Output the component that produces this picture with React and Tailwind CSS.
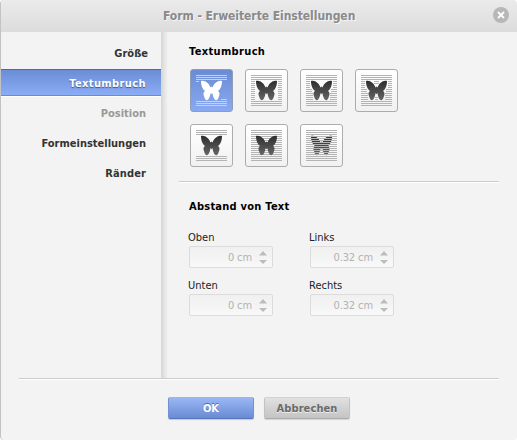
import React from "react";

const BUTTERFLY =
  "M11 12 C12.5 11.4 14 11.7 15.6 12.6 C18 14 19.6 16 20.5 18.6 L21.5 17.6 L22.5 18.6 C23.4 16 25 14 27.4 12.6 C29 11.7 30.5 11.4 32 12 C32.1 15.5 31 18.8 29.4 20.8 C29 21.4 28.4 21.7 27.8 21.9 C29.6 22.8 29.9 24.8 29.1 26.8 C28.6 28.6 28 30.6 26.6 31.2 C24.6 31.6 23.2 28.4 22.4 24 L21.5 25.2 L20.6 24 C19.8 28.4 18.4 31.6 16.4 31.2 C15 30.6 14.4 28.6 13.9 26.8 C13.1 24.8 13.4 22.8 15.2 21.9 C14.6 21.7 14 21.4 13.6 20.8 C12 18.8 10.9 15.5 11 12 Z";

const ROWS = Array.from({ length: 16 }, (_, i) => 6 + i * 2);

function lineSpans(kind, y) {
  const inner = y > 11 && y < 31;
  if (!inner) return [[6, 37]];
  switch (kind) {
    case "inline":
      return y === 12 ? [[6, 9]] : y === 30 ? [[31, 37]] : [];
    case "square":
      return [[6, 10], [33, 37]];
    case "tight": {
      const inset = y < 20 ? 10 : y < 24 ? 12 : 13;
      return [[6, inset], [43 - inset, 37]];
    }
    case "through": {
      const inset = y < 20 ? 10 : y < 24 ? 12 : 13;
      const gap = y < 16 ? [[19, 24]] : y > 27 ? [[20, 23]] : [];
      return [[6, inset], ...gap, [43 - inset, 37]];
    }
    case "topBottom":
      return [];
    default:
      return [[6, 37]];
  }
}

function WrapTile({ kind, active }) {
  const lines = ROWS.flatMap((y) =>
    lineSpans(kind, y).map(([a, b]) => <rect key={`${y}-${a}`} x={a} y={y} width={b - a} height="1" />)
  );
  const fill = active ? "#fff" : `url(#wing-${kind})`;
  return (
    <button
      className={
        "h-[43px] w-[43px] overflow-hidden rounded-[3px] border " +
        (active
          ? "border-[#8f9db9] bg-linear-to-b from-[#6b8cd2] to-[#89aaf2]"
          : "border-[#acacac] bg-linear-to-b from-white to-[#f1f1f1]")
      }
    >
      <svg viewBox="1 1 41 41" className="block h-[41px] w-[41px]">
        <defs>
          <linearGradient id={`wing-${kind}`} x1="0" y1="0" x2="0" y2="1">
            <stop offset="0" stopColor="#2d2d2d" />
            <stop offset="1" stopColor="#666" />
          </linearGradient>
          <clipPath id={`rows-${kind}`}>
            {ROWS.map((y) => (
              <rect key={y} x="6" y={y + 1} width="31" height="1" />
            ))}
          </clipPath>
        </defs>
        <g fill={active ? "#c0d0f6" : "#b4b4b4"}>{lines}</g>
        {kind === "behind" ? (
          <>
            <path d={BUTTERFLY} fill="#b4b4b4" />
            <path d={BUTTERFLY} fill={fill} clipPath={`url(#rows-${kind})`} />
          </>
        ) : (
          <path d={BUTTERFLY} fill={fill} />
        )}
      </svg>
    </button>
  );
}

function Spinner({ label, value }) {
  return (
    <div className="w-[84px]">
      <div className="-ml-px h-4 whitespace-nowrap pt-px text-[11px] leading-4 text-[#222]">{label}</div>
      <div className="mt-px flex h-[22px] items-center rounded-[2px] border border-[#dcdcdc] bg-linear-to-b from-[#f0f0f0] to-[#f8f8f8]">
        <span className="flex-1 whitespace-nowrap pt-px text-right text-[11px] leading-5 tracking-[-0.1px] text-[#b2b2b2]">
          {value}
        </span>
        <svg viewBox="0 0 8 13" className="mr-[5px] ml-[7px] h-[13px] w-2" fill="#bcbcbc">
          <path d="M0 4.5 L4 0 L8 4.5 Z M0 9 H8 L4 13 Z" />
        </svg>
      </div>
    </div>
  );
}

const NAV = [
  { label: "Größe", cls: "pr-[13px] text-[#333]" },
  { label: "Textumbruch", active: true, cls: "pr-[15px] tracking-[0.4px]" },
  { label: "Position", cls: "pr-[15px] text-[#999]" },
  { label: "Formeinstellungen", cls: "pr-[15px] text-[#333]" },
  { label: "Ränder", cls: "pr-[15px] text-[#333] tracking-[0.1px]" },
];

export default function App() {
  return (
    <div className="h-[440px] w-[517px] overflow-hidden bg-white [font-family:'DejaVu_Sans_Condensed','DejaVu_Sans',sans-serif] [font-stretch:condensed]">
      <div className="flex h-full flex-col overflow-hidden rounded-[4px] border-l border-[#c3c3c3] bg-[#f3f3f3]">
        <header className="flex h-8 shrink-0 items-center bg-linear-to-b from-[#ebebeb] to-[#dcdcdc] pr-2">
          <h1 className="ml-[162px] flex-1 whitespace-nowrap text-[12px] font-bold tracking-[-0.05px] text-[#8a8a8a] [text-shadow:1px_1px_0_#f6f6f6]">
            Form - Erweiterte Einstellungen
          </h1>
          <svg viewBox="0 0 16 16" className="mt-[-2px] h-4 w-4">
            <circle cx="8" cy="8" r="8" fill="#b7b7b7" />
            <path d="M5 5 L11 11 M11 5 L5 11" stroke="#fff" strokeWidth="1.8" />
          </svg>
        </header>

        <div className="flex h-[346px] shrink-0">
          <nav className="flex w-40 shrink-0 flex-col pt-[7px]">
            {NAV.map((n) => (
              <div
                key={n.label}
                className={
                  "mb-[3px] h-[27px] whitespace-nowrap text-right text-[11px] font-bold " +
                  n.cls +
                  (n.active
                    ? " border-t border-b border-t-[#506aa8] border-b-[#7189c8] bg-linear-to-b from-[#6b8dd6] to-[#8badf5] leading-[27px] text-white shadow-[0_1px_0_#fff] [text-shadow:0_1px_1px_#3b558e]"
                    : " leading-[29px]")
                }
              >
                {n.label}
              </div>
            ))}
          </nav>
          <div className="w-[7px] shrink-0 bg-linear-to-r from-[#d6d6d6] to-[#f3f3f3]" />

          <main className="flex-1 pr-[18px] pl-[11px]">
            <h2 className="ml-[10px] h-[37px] pt-3 text-[11px] leading-4 font-bold tracking-[0.35px] text-black">Textumbruch</h2>
            <div className="ml-[11px] grid grid-cols-[repeat(4,43px)] gap-3">
              <WrapTile kind="inline" active />
              <WrapTile kind="square" />
              <WrapTile kind="tight" />
              <WrapTile kind="through" />
              <WrapTile kind="topBottom" />
              <WrapTile kind="front" />
              <WrapTile kind="behind" />
            </div>
            <div className="mt-[14px] h-[2px] border-t border-[#cbcbcb] bg-white" />
            <h2 className="mt-[15px] ml-[10px] pt-px text-[11px] leading-4 font-bold tracking-[0.25px] text-black">Abstand von Text</h2>
            <div className="mt-[14px] ml-[10px] grid grid-cols-[84px_84px] gap-x-[37px] gap-y-[9px]">
              <Spinner label="Oben" value="0 cm" />
              <Spinner label="Links" value="0.32 cm" />
              <Spinner label="Unten" value="0 cm" />
              <Spinner label="Rechts" value="0.32 cm" />
            </div>
          </main>
        </div>

        <footer className="mr-[18px] ml-[18px] border-t border-[#cbcbcb] shadow-[inset_0_1px_0_#fff]">
          <div className="ml-[149px] flex gap-[10px] pt-[18px]">
            <button className="h-[22px] w-[86px] rounded-[2px] border border-t-[#9db4e8] border-r-[#7690cf] border-b-[#5875ba] border-l-[#7690cf] bg-linear-to-b from-[#9bb7f4] to-[#698bd4] pt-px text-[11px] leading-5 font-bold text-white shadow-[0_1px_1px_#c8c8c8] [text-shadow:0_-1px_0_#4f6aa8]">
              OK
            </button>
            <button className="h-[22px] w-[86px] rounded-[2px] border border-t-[#d2d2d2] border-r-[#c2c2c2] border-b-[#ababab] border-l-[#c2c2c2] bg-linear-to-b from-[#e1e1e1] to-[#c4c4c4] pt-px text-[11px] leading-5 font-bold tracking-[0.1px] text-[#6a6a6a] shadow-[0_1px_1px_#d4d4d4] [text-shadow:0_1px_0_#eee]">
              Abbrechen
            </button>
          </div>
        </footer>
      </div>
    </div>
  );
}
